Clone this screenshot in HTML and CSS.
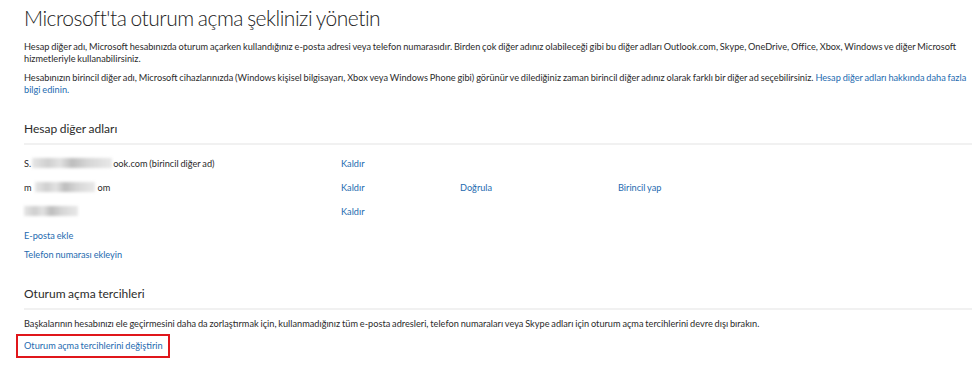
FILE: index.html
```html
<!DOCTYPE html>
<html lang="tr">
<head>
    <meta charset="UTF-8">
    <meta name="viewport" content="width=device-width, initial-scale=1.0">
    <title>Microsoft'ta oturum açma şeklinizi yönetin</title>
    <link rel="stylesheet" href="styles.css">
</head>
<body>
    <div class="page">
        <h1>Microsoft'ta oturum açma şeklinizi yönetin</h1>

        <p class="intro">Hesap diğer adı, Microsoft hesabınızda oturum açarken kullandığınız e-posta adresi veya telefon numarasıdır. Birden çok diğer adınız olabileceği gibi bu diğer adları Outlook.com, Skype, OneDrive, Office, Xbox, Windows ve diğer Microsoft hizmetleriyle kullanabilirsiniz.</p>
        <p class="intro">Hesabınızın birincil diğer adı, Microsoft cihazlarınızda (Windows kişisel bilgisayarı, Xbox veya Windows Phone gibi) görünür ve dilediğiniz zaman birincil diğer adınız olarak farklı bir diğer ad seçebilirsiniz. <a href="#">Hesap diğer adları hakkında daha fazla bilgi edinin.</a></p>

        <div class="section aliases">
            <h2>Hesap diğer adları</h2>
            <div class="alias-list">
                <div class="alias-row">
                    <span class="alias-name">S.<span class="redact r1"></span>ook.com (birincil diğer ad)</span>
                    <a href="#">Kaldır</a>
                    <span></span>
                    <span></span>
                </div>
                <div class="alias-row">
                    <span class="alias-name">m<span class="redact r2"></span>om</span>
                    <a href="#">Kaldır</a>
                    <a href="#">Doğrula</a>
                    <a href="#">Birincil yap</a>
                </div>
                <div class="alias-row">
                    <span class="alias-name"><span class="redact r3"></span></span>
                    <a href="#">Kaldır</a>
                    <span></span>
                    <span></span>
                </div>
            </div>
            <div class="add-links">
                <a href="#">E-posta ekle</a>
                <a href="#">Telefon numarası ekleyin</a>
            </div>
        </div>

        <div class="section prefs">
            <h2>Oturum açma tercihleri</h2>
            <p class="note">Başkalarının hesabınızı ele geçirmesini daha da zorlaştırmak için, kullanmadığınız tüm e-posta adresleri, telefon numaraları veya Skype adları için oturum açma tercihlerini devre dışı bırakın.</p>
            <div class="highlight">
                <a href="#">Oturum açma tercihlerini değiştirin</a>
            </div>
        </div>
    </div>
</body>
</html>
```

FILE: styles.css
```css
body {
    margin: 0;
    background-color: #ffffff;
    color: #2b2b2b;
    font-family: Lato, "Open Sans", sans-serif;
    font-size: 9.2px;
    word-spacing: -0.5px;
}
a {
    color: #1e6bb0;
    text-decoration: none;
}
.page {
    padding: 4px 3px 0 24px;
}
h1 {
    margin: 0;
    font-size: 21px;
    font-weight: 300;
    line-height: 28px;
    letter-spacing: -0.5px;
    word-spacing: -1px;
    color: #222;
}
.intro {
    margin: 9px 0 0;
    line-height: 12px;
}
.intro + .intro {
    margin-top: 7px;
}
.section h2 {
    margin: 0;
    font-size: 12px;
    font-weight: 400;
    line-height: 18px;
    padding-bottom: 5px;
    border-bottom: 2px solid #f1f1f1;
}
.aliases {
    margin-top: 24px;
}
.alias-list {
    margin-top: 12px;
}
.alias-row {
    display: grid;
    grid-template-columns: 317px 119px 158px auto;
    height: 24px;
    align-items: start;
    line-height: 13px;
}
.alias-name {
    white-space: nowrap;
}
.redact {
    display: inline-block;
    height: 10px;
    vertical-align: -1px;
    background: linear-gradient(90deg, #e6e6e6 0%, #cfcfcf 20%, #e2e2e2 35%, #bdbdbd 50%, #d6d6d6 70%, #e8e8e8 100%);
    filter: blur(1.5px);
}
.r1 {
    width: 80px;
    margin: 0 1px;
}
.r2 {
    width: 60px;
    margin: 0 3px;
}
.r3 {
    width: 54px;
}
.add-links {
    display: flex;
    flex-direction: column;
    gap: 6px;
    line-height: 13px;
}
.prefs {
    margin-top: 24px;
}
.note {
    margin: 7px 0 0;
    line-height: 13px;
}
.highlight {
    width: fit-content;
    margin: 4px 0 0 -8px;
    padding: 3px 5px 4px 6px;
    border: 2px solid #e0161b;
    line-height: 13px;
}
```
